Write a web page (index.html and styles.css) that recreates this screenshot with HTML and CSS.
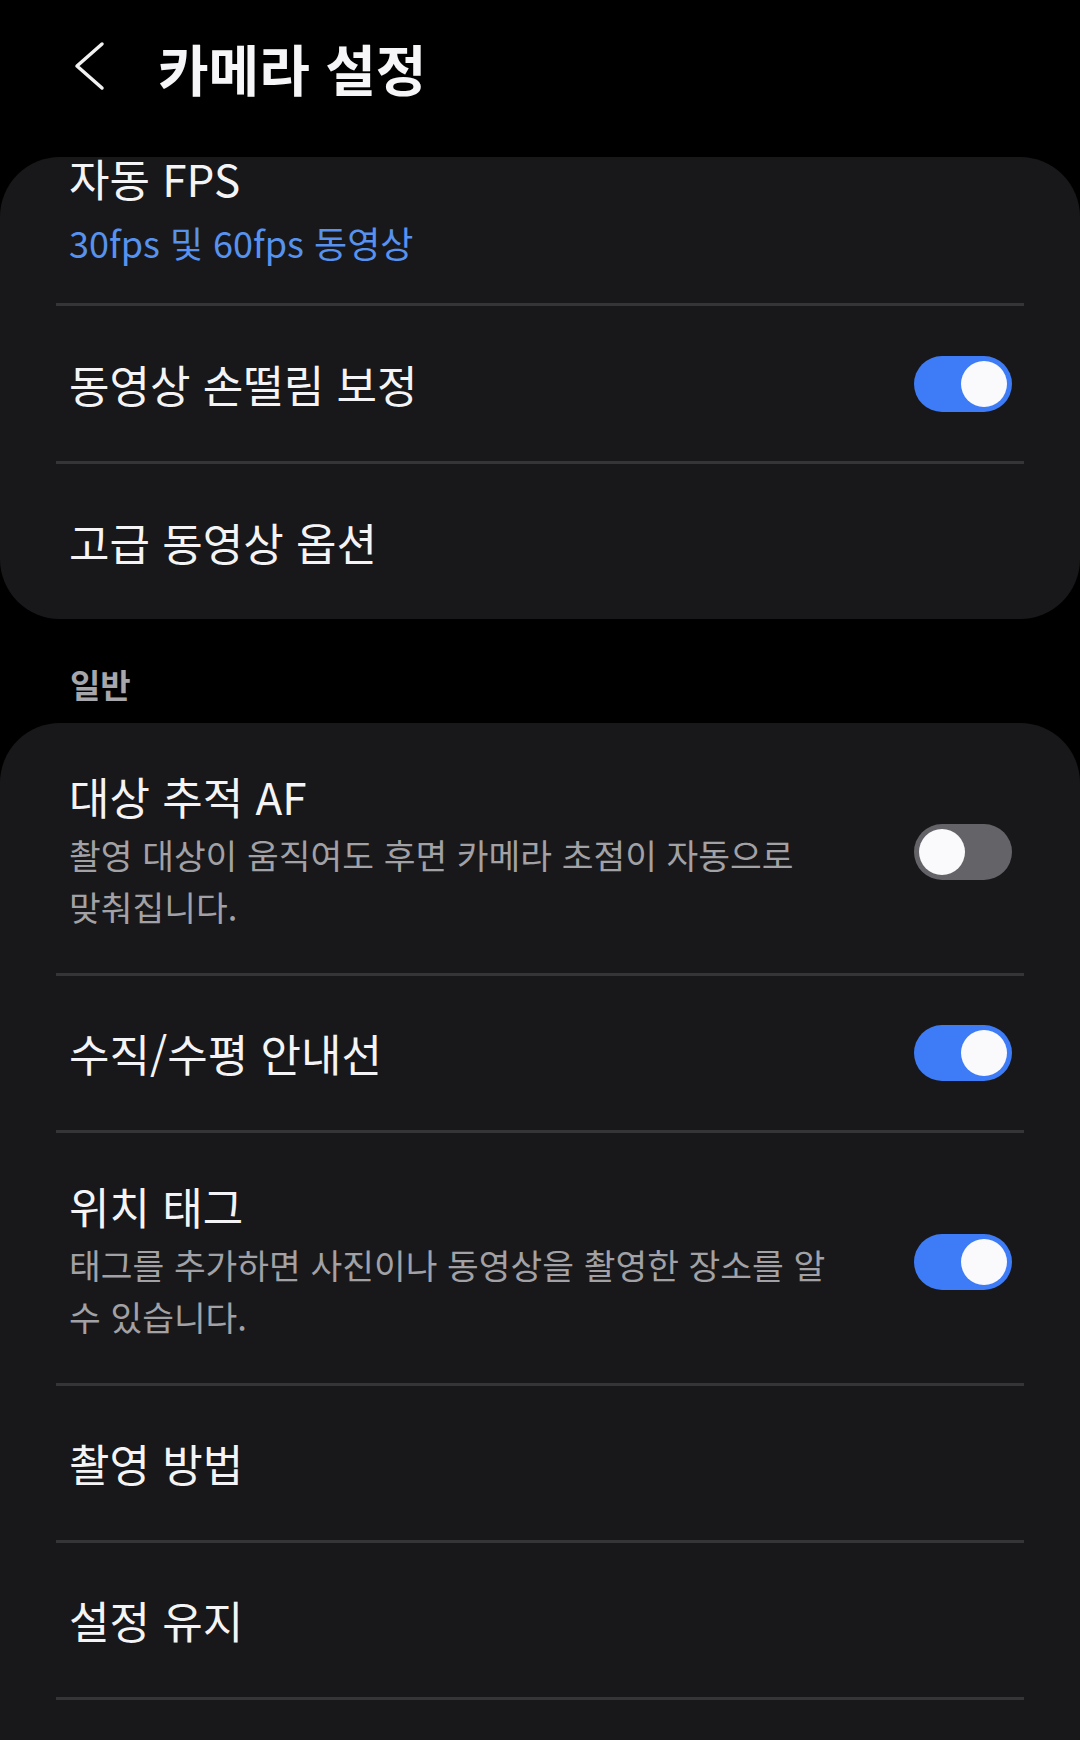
FILE: index.html
```html
<!DOCTYPE html>
<html lang="ko">
<head>
    <meta charset="UTF-8">
    <meta name="viewport" content="width=device-width, initial-scale=1.0">
    <title>카메라 설정</title>
    <link rel="stylesheet" href="styles.css">
</head>
<body>

<div class="top-bar">
    <button class="back-btn" aria-label="뒤로">
        <svg width="32" height="50" viewBox="0 0 32 50">
            <path d="M29 3 L4 25 L29 47" fill="none" stroke="#f2f2f2" stroke-width="3.5" stroke-linecap="round" stroke-linejoin="round"/>
        </svg>
    </button>
    <h1 class="page-title">카메라 설정</h1>
</div>

<div class="card">
    <div class="setting-row first-row">
        <div class="setting-text">
            <div class="setting-title">자동 FPS</div>
            <div class="setting-value">30fps 및 60fps 동영상</div>
        </div>
    </div>
    <div class="setting-row">
        <div class="setting-text">
            <div class="setting-title">동영상 손떨림 보정</div>
        </div>
        <div class="switch on"><span class="knob"></span></div>
    </div>
    <div class="setting-row">
        <div class="setting-text">
            <div class="setting-title">고급 동영상 옵션</div>
        </div>
    </div>
</div>

<div class="section-label">일반</div>

<div class="card card-open">
    <div class="setting-row with-desc">
        <div class="setting-text">
            <div class="setting-title">대상 추적 AF</div>
            <div class="setting-desc">촬영 대상이 움직여도 후면 카메라 초점이 자동으로 맞춰집니다.</div>
        </div>
        <div class="switch"><span class="knob"></span></div>
    </div>
    <div class="setting-row">
        <div class="setting-text">
            <div class="setting-title">수직/수평 안내선</div>
        </div>
        <div class="switch on"><span class="knob"></span></div>
    </div>
    <div class="setting-row with-desc">
        <div class="setting-text">
            <div class="setting-title">위치 태그</div>
            <div class="setting-desc">태그를 추가하면 사진이나 동영상을 촬영한 장소를 알 수 있습니다.</div>
        </div>
        <div class="switch on"><span class="knob"></span></div>
    </div>
    <div class="setting-row">
        <div class="setting-text">
            <div class="setting-title">촬영 방법</div>
        </div>
    </div>
    <div class="setting-row">
        <div class="setting-text">
            <div class="setting-title">설정 유지</div>
        </div>
    </div>
</div>

</body>
</html>
```

FILE: styles.css
```css
body {
    margin: 0;
    background-color: #000000;
    color: #f4f4f6;
    font-family: "Noto Sans CJK KR", "Noto Sans", sans-serif;
}
.top-bar {
    height: 157px;
    display: flex;
    align-items: flex-start;
    box-sizing: border-box;
    padding: 37px 0 0 73px;
}
.back-btn {
    background: none;
    border: none;
    padding: 0;
    margin-top: 4px;
    width: 32px;
    height: 50px;
}
.page-title {
    margin: 0 0 0 53px;
    font-size: 55px;
    line-height: 60px;
    font-weight: 700;
    color: #f6f6f8;
}
.card {
    background-color: #18181a;
    border-radius: 60px;
    padding: 0 56px;
}
.card-open {
    border-radius: 60px 60px 0 0;
    padding-bottom: 60px;
}
.setting-row {
    display: flex;
    align-items: center;
    min-height: 155px;
    padding: 0 12px 0 13px;
    border-bottom: 3px solid #353538;
}
.card-open .setting-row {
    min-height: 154px;
}
.card > .setting-row:last-child {
    border-bottom: none;
}
.card-open > .setting-row:last-child {
    border-bottom: 3px solid #353538;
}
.first-row {
    min-height: 0;
    padding-top: 0;
    padding-bottom: 35px;
}
.first-row .setting-title {
    margin-top: -4px;
}
.first-row .setting-value {
    margin-top: 13px;
}
.with-desc {
    padding-top: 48px;
    padding-bottom: 41px;
}
.setting-text {
    flex: 1;
}
.setting-title {
    font-size: 44px;
    line-height: 50px;
}
.setting-value {
    margin-top: 9px;
    font-size: 36px;
    line-height: 52px;
    color: #5792ee;
}
.setting-desc {
    margin-top: 7px;
    max-width: 775px;
    font-size: 34.5px;
    line-height: 52px;
    color: #a1a1a6;
    word-break: keep-all;
}
.section-label {
    padding: 45px 0 19px 70px;
    font-size: 33px;
    line-height: 40px;
    font-weight: 700;
    color: #a6a6ab;
}
.switch {
    position: relative;
    width: 98px;
    height: 56px;
    border-radius: 28px;
    background-color: #646468;
    flex-shrink: 0;
}
.switch.on {
    background-color: #3d7cf6;
}
.knob {
    position: absolute;
    top: 5px;
    left: 5px;
    width: 46px;
    height: 46px;
    border-radius: 50%;
    background-color: #fafafc;
}
.switch.on .knob {
    left: 47px;
}
```
